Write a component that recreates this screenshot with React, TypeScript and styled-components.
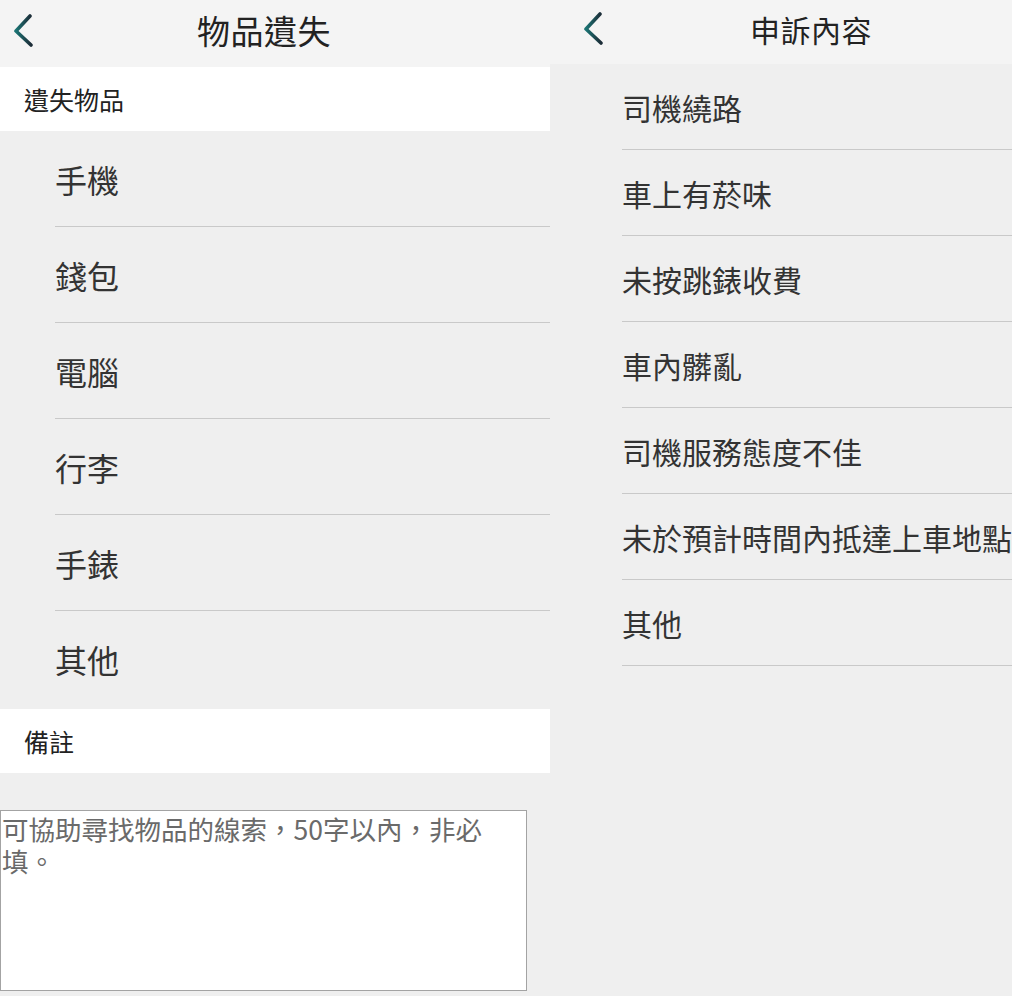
import styled, { createGlobalStyle } from 'styled-components'

const GlobalStyle = createGlobalStyle`
  html, body {
    margin: 0;
    padding: 0;
    background: #efefef;
  }
  body {
    font-family: "Noto Sans CJK TC", "Noto Sans", sans-serif;
    color: #333;
  }
  * {
    box-sizing: border-box;
  }
`

const Screen = styled.div`
  display: flex;
  width: 1012px;
  height: 996px;
  overflow: hidden;
  background: #efefef;
`

const Panel = styled.div<{ $width?: number }>`
  display: flex;
  flex-direction: column;
  width: ${p => (p.$width ? `${p.$width}px` : 'auto')};
  flex: ${p => (p.$width ? 'none' : '1')};
  min-width: 0;
  overflow: hidden;
  background: #efefef;
`

const Header = styled.div<{ $height: number; $pad: number }>`
  display: flex;
  align-items: center;
  height: ${p => p.$height}px;
  padding: 0 0 6px ${p => p.$pad}px;
  background: #f4f4f4;
  flex: none;
`

const BackButton = styled.button`
  display: flex;
  align-items: center;
  padding: 0;
  margin: 0;
  border: none;
  background: transparent;
  cursor: pointer;
`

const Title = styled.h1<{ $size: number; $offset: number }>`
  margin: 0 0 0 ${p => p.$offset}px;
  font-size: ${p => p.$size}px;
  font-weight: 400;
  color: #222;
  line-height: 1;
  letter-spacing: 0.5px;
`

const SectionLabel = styled.div<{ $height: number }>`
  display: flex;
  align-items: center;
  height: ${p => p.$height}px;
  padding-left: 24px;
  background: #fff;
  font-size: 25px;
  color: #222;
  flex: none;
`

const List = styled.ul<{ $indent: number }>`
  list-style: none;
  margin: 0;
  padding: 0 0 0 ${p => p.$indent}px;
`

const Row = styled.li<{ $height: number; $size: number; $divider: boolean }>`
  display: flex;
  align-items: center;
  height: ${p => p.$height}px;
  font-size: ${p => p.$size}px;
  color: #333;
  white-space: nowrap;
  border-bottom: ${p => (p.$divider ? '1.5px solid #c9c9c9' : 'none')};
  cursor: pointer;
`

const NoteArea = styled.div`
  padding-top: 37px;
`

const NoteInput = styled.textarea`
  display: block;
  width: 527px;
  height: 181px;
  margin: 0;
  padding: 2px 1px;
  border: 1px solid #a3a3a3;
  background: #fff;
  resize: none;
  font-family: "Noto Sans CJK TC", "Noto Sans", sans-serif;
  font-size: 26.5px;
  line-height: 32px;
  color: #333;
  outline: none;

  &::placeholder {
    color: #6a6a6a;
  }
`

function BackIcon({ id }: { id: string }) {
  return (
    <svg width="22" height="34" viewBox="0 0 22 34" fill="none">
      <defs>
        <linearGradient id={id} x1="0" y1="0" x2="1" y2="0">
          <stop offset="0" stopColor="#1b7373" />
          <stop offset="1" stopColor="#1c2c37" />
        </linearGradient>
      </defs>
      <path
        d="M18 2 L4 17 L19 31"
        stroke={`url(#${id})`}
        strokeWidth="3.6"
        strokeLinecap="round"
        strokeLinejoin="round"
      />
    </svg>
  )
}

const lostItems = ['手機', '錢包', '電腦', '行李', '手錶', '其他']

const complaints = [
  '司機繞路',
  '車上有菸味',
  '未按跳錶收費',
  '車內髒亂',
  '司機服務態度不佳',
  '未於預計時間內抵達上車地點',
  '其他',
]

export default function App() {
  return (
    <>
      <GlobalStyle />
      <Screen>
        <Panel $width={550}>
          <Header $height={67} $pad={12}>
            <BackButton aria-label="返回">
              <BackIcon id="back-left" />
            </BackButton>
            <Title $size={33} $offset={163}>物品遺失</Title>
          </Header>
          <SectionLabel $height={64}>遺失物品</SectionLabel>
          <List $indent={55}>
            {lostItems.map((item, i) => (
              <Row
                key={item}
                $height={96}
                $size={32}
                $divider={i < lostItems.length - 1}
              >
                {item}
              </Row>
            ))}
          </List>
          <SectionLabel $height={64} style={{ marginTop: 2 }}>備註</SectionLabel>
          <NoteArea>
            <NoteInput placeholder={'可協助尋找物品的線索，50字以內，非必\n填。'} />
          </NoteArea>
        </Panel>

        <Panel>
          <Header $height={64} $pad={32}>
            <BackButton aria-label="返回">
              <BackIcon id="back-right" />
            </BackButton>
            <Title $size={30} $offset={146}>申訴內容</Title>
          </Header>
          <List $indent={72}>
            {complaints.map(item => (
              <Row key={item} $height={86} $size={30} $divider>
                {item}
              </Row>
            ))}
          </List>
        </Panel>
      </Screen>
    </>
  )
}
